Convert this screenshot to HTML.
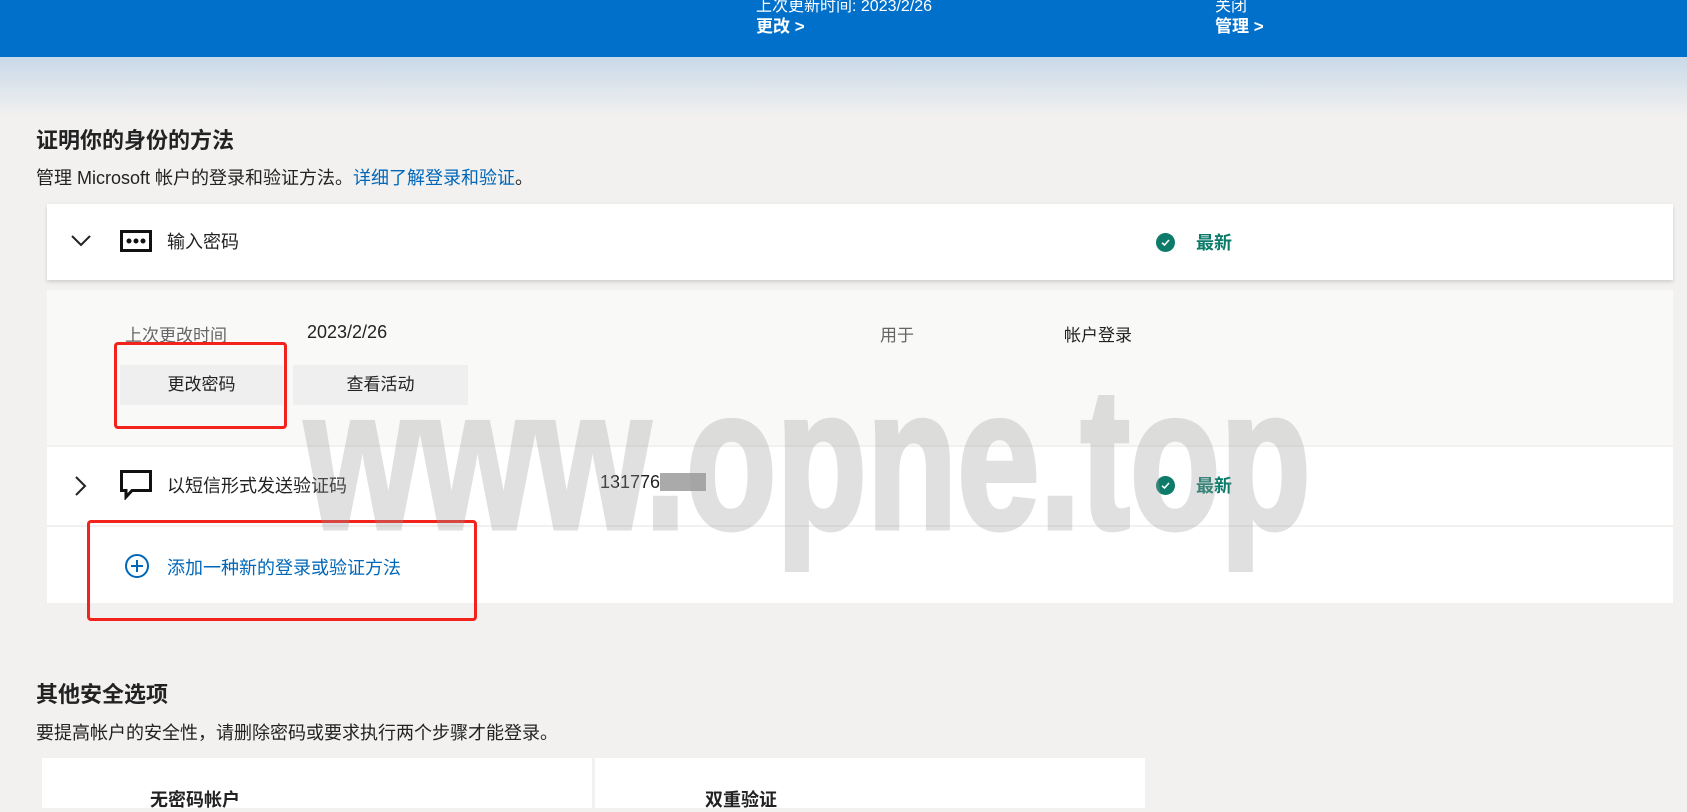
<!DOCTYPE html>
<html><head><meta charset="utf-8"><style>
*{margin:0;padding:0;box-sizing:border-box}
body{width:1687px;height:797px;overflow:hidden;background:#f2f1f0;font-family:"Liberation Sans","Noto Sans CJK SC",sans-serif;position:relative;color:#222}
.top{position:absolute;left:0;top:0;width:1687px;height:57px;background:#0170cb;color:#fff}
.grad{position:absolute;left:0;top:57px;width:1687px;height:60px;background:linear-gradient(#c9d9e8,#f2f1f0)}
.abs{position:absolute;white-space:nowrap}
.card{position:absolute;left:47px;width:1626px;background:#fff}
.btn{position:absolute;background:#efefef;font-size:17px;text-align:center;line-height:40px;color:#222}
.red{position:absolute;border:3px solid #f2231c;border-radius:4px}
.ok{position:absolute;width:19px;height:19px}
.okt{position:absolute;color:#0c7b6a;font-weight:bold;font-size:18px}
</style></head><body>
<div class="top">
<div class="abs" style="left:756px;top:-8px;font-size:16px">上次更新时间: 2023/2/26</div>
<div class="abs" style="left:756px;top:12px;font-size:17px;font-weight:bold">更改 &gt;</div>
<div class="abs" style="left:1215px;top:-8px;font-size:16px">关闭</div>
<div class="abs" style="left:1215px;top:12px;font-size:17px;font-weight:bold">管理 &gt;</div>
</div>
<div class="grad"></div>
<div class="abs" style="left:36px;top:123px;font-size:22px;font-weight:bold;color:#222">证明你的身份的方法</div>
<div class="abs" style="left:36px;top:164px;font-size:18px">管理 Microsoft 帐户的登录和验证方法。<span style="color:#0067b8">详细了解登录和验证</span>。</div>

<div class="card" style="top:204px;height:76px;box-shadow:0 2px 4px rgba(0,0,0,.15)"></div>
<svg class="abs" style="left:70px;top:234px" width="22" height="14"><path d="M2 2 L11 11 L20 2" fill="none" stroke="#222" stroke-width="2"/></svg>
<svg class="abs" style="left:120px;top:230px" width="32" height="22"><rect x="1.5" y="1.5" width="29" height="19" fill="none" stroke="#111" stroke-width="3"/><circle cx="9" cy="11" r="2.5" fill="#111"/><circle cx="16" cy="11" r="2.5" fill="#111"/><circle cx="23" cy="11" r="2.5" fill="#111"/></svg>
<div class="abs" style="left:167px;top:228px;font-size:18px">输入密码</div>
<svg class="ok" style="left:1156px;top:233px" viewBox="0 0 19 19"><circle cx="9.5" cy="9.5" r="9.5" fill="#0c7b6a"/><path d="M6 9.8 L8.5 12 L13 7" fill="none" stroke="#fff" stroke-width="1.6"/></svg>
<div class="okt" style="left:1196px;top:229px">最新</div>

<div class="card" style="top:290px;height:155px;background:#f9f9f8"></div>
<div class="abs" style="left:125px;top:321px;font-size:17px;color:#666">上次更改时间</div>
<div class="abs" style="left:307px;top:322px;font-size:18px">2023/2/26</div>
<div class="abs" style="left:880px;top:321px;font-size:17px;color:#666">用于</div>
<div class="abs" style="left:1064px;top:321px;font-size:17px">帐户登录</div>
<div class="btn" style="left:120px;top:365px;width:163px">更改密码</div>
<div class="btn" style="left:293px;top:365px;width:175px">查看活动</div>
<div class="red" style="left:114px;top:342px;width:173px;height:87px"></div>

<div class="card" style="top:447px;height:78px"></div>
<svg class="abs" style="left:74px;top:475px" width="14" height="22"><path d="M2 2 L11 11 L2 20" fill="none" stroke="#222" stroke-width="2"/></svg>
<svg class="abs" style="left:120px;top:470px" width="32" height="30"><path d="M1.5 1.5 H30.5 V20.5 H12 L6 27 V20.5 H1.5 Z" fill="none" stroke="#111" stroke-width="3"/></svg>
<div class="abs" style="left:167px;top:472px;font-size:18px">以短信形式发送验证码</div>
<div class="abs" style="left:600px;top:472px;font-size:18px">131776<span style="display:inline-block;width:46px;height:18px;background:#aaa;vertical-align:-3px"></span></div>
<svg class="ok" style="left:1156px;top:476px" viewBox="0 0 19 19"><circle cx="9.5" cy="9.5" r="9.5" fill="#0c7b6a"/><path d="M6 9.8 L8.5 12 L13 7" fill="none" stroke="#fff" stroke-width="1.6"/></svg>
<div class="okt" style="left:1196px;top:472px">最新</div>

<div class="card" style="top:527px;height:76px"></div>
<svg class="abs" style="left:124px;top:553px" width="26" height="26"><circle cx="13" cy="13" r="11" fill="none" stroke="#0067b8" stroke-width="2"/><path d="M13 7V19M7 13H19" stroke="#0067b8" stroke-width="2"/></svg>
<div class="abs" style="left:167px;top:554px;font-size:18px;color:#0067b8">添加一种新的登录或验证方法</div>
<div class="red" style="left:87px;top:520px;width:390px;height:101px"></div>

<div class="abs" style="left:36px;top:677px;font-size:22px;font-weight:bold">其他安全选项</div>
<div class="abs" style="left:36px;top:719px;font-size:18px">要提高帐户的安全性，请删除密码或要求执行两个步骤才能登录。</div>
<div class="abs" style="left:42px;top:758px;width:550px;height:50px;background:#fff"></div>
<div class="abs" style="left:595px;top:758px;width:550px;height:50px;background:#fff"></div>
<div class="abs" style="left:150px;top:786px;font-size:18px;font-weight:bold">无密码帐户</div>
<div class="abs" style="left:705px;top:786px;font-size:18px;font-weight:bold">双重验证</div>

<div class="abs" style="left:305px;top:360px;font-size:200px;line-height:1;font-weight:bold;color:#9a9a9a;-webkit-text-stroke:5px #9a9a9a;opacity:0.3;transform:scaleX(0.74);transform-origin:0 0">www.opne.top</div>
</body></html>
